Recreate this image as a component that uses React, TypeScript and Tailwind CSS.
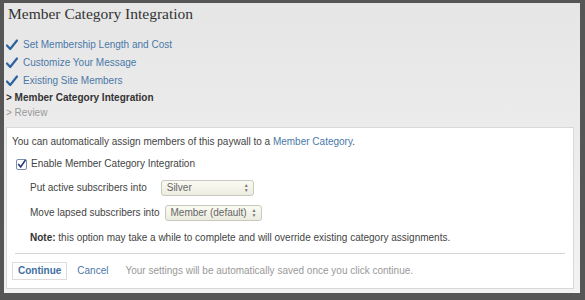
import React from 'react'

function Check() {
  return (
    <svg width="12" height="12" viewBox="0 0 12 12" className="shrink-0">
      <path d="M1 6.5 L4.2 10 L11 1.5" fill="none" stroke="#2f63a0" strokeWidth="2.2" strokeLinecap="round" strokeLinejoin="round" />
    </svg>
  )
}

function Select({ label, width }: { label: string; width: string }) {
  return (
    <div className={`flex items-center justify-between h-[16px] whitespace-nowrap rounded-[3px] border border-[#c8c8c0] bg-gradient-to-b from-[#fbfbf4] to-[#ececdf] pl-[5px] pr-[4px] text-[#666] ${width}`}>
      <span>{label}</span>
      <span className="flex flex-col items-center text-[5px] leading-[5px] text-[#777]">
        <span>▲</span>
        <span>▼</span>
      </span>
    </div>
  )
}

export default function App() {
  return (
    <div className="w-[585px] h-[300px] bg-[#565656] pl-[4px] pt-[3px] pr-[5px] pb-[7px] font-['Liberation_Sans',Arial,sans-serif] text-[10px] leading-[12px] text-[#444]">
      <div className="h-full bg-gradient-to-b from-[#e6e6e6] to-[#f2f2f2] pl-[2px] pr-[6px] pb-[4px] flex flex-col">
        {/* Heading */}
        <h1 className="pl-[2px] font-['Liberation_Serif',Georgia,serif] text-[15.5px] leading-[21px] text-[#333]">
          Member Category Integration
        </h1>

        {/* Steps */}
        <ul className="mt-[12px] leading-[18px]">
          <li className="flex items-center gap-[5px] text-[#4b78a8]">
            <Check />
            Set Membership Length and Cost
          </li>
          <li className="flex items-center gap-[5px] text-[#4b78a8]">
            <Check />
            Customize Your Message
          </li>
          <li className="flex items-center gap-[5px] text-[#4b78a8]">
            <Check />
            Existing Site Members
          </li>
          <li className="font-bold text-[#333] leading-[16px]">&gt; Member Category Integration</li>
          <li className="text-[#999] leading-[14px]">&gt; Review</li>
        </ul>

        {/* Panel */}
        <div className="mt-[7px] flex-1 bg-white border border-[#d8d8d8] px-[4px]">
          <p className="pt-[8px] pl-[1px]">
            You can automatically assign members of this paywall to a{' '}
            <span className="text-[#4b78a8]">Member Category</span>.
          </p>

          <label className="mt-[10px] ml-[5px] flex items-center gap-[4px]">
            <span className="w-[11px] h-[11px] rounded-[2px] border border-[#7a8fb0] bg-white flex items-center justify-center">
              <svg width="11" height="11" viewBox="0 0 11 11">
                <path d="M2 5.5 L4.5 8.5 L10 0.5" fill="none" stroke="#243c74" strokeWidth="2" strokeLinecap="round" />
              </svg>
            </span>
            Enable Member Category Integration
          </label>

          <div className="ml-[19px] mt-[10px] flex flex-col">
            <div className="flex items-center gap-[14px]">
              <span>Put active subscribers into</span>
              <Select label="Silver" width="w-[93px]" />
            </div>
            <div className="mt-[9px] flex items-center gap-[5px]">
              <span>Move lapsed subscribers into</span>
              <Select label="Member (default)" width="w-[97px]" />
            </div>
            <p className="mt-[11px]">
              <b className="text-[#333]">Note:</b> this option may take a while to complete and will override existing category assignments.
            </p>
          </div>

          <div className="mt-[9px] mx-[4px] border-t border-[#d6d6d6]" />

          <div className="mt-[8px] ml-[1px] flex items-center">
            <button className="h-[18px] px-[5px] border border-[#dcdcdc] bg-white font-bold text-[#41709f]">
              Continue
            </button>
            <span className="ml-[10px] text-[#4b78a8]">Cancel</span>
            <span className="ml-[17px] text-[#999]">Your settings will be automatically saved once you click continue.</span>
          </div>
        </div>
      </div>
    </div>
  )
}
